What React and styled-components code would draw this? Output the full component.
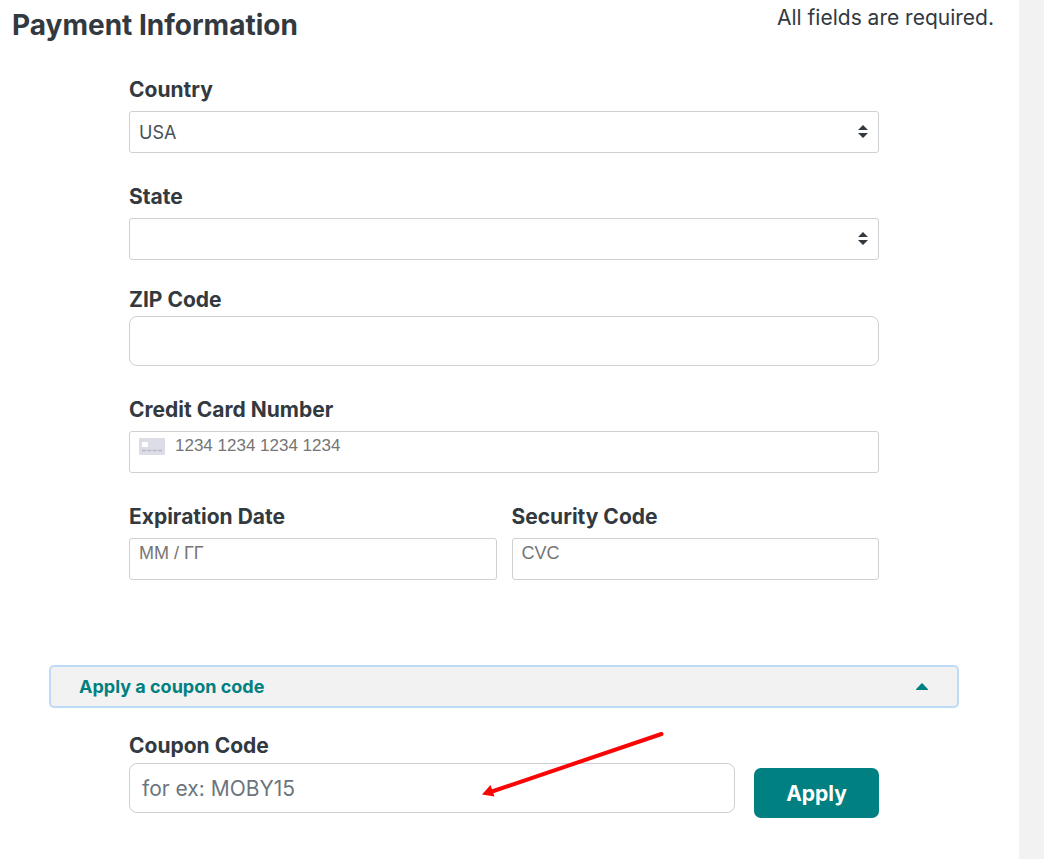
import React, { useState } from "react";
import styled, { createGlobalStyle } from "styled-components";

const App = () => {
  const [open, setOpen] = useState(true);

  return (
    <Page>
      <GlobalStyle />
      <Sheet>
        <Header>
          <Title>Payment Information</Title>
          <Note>All fields are required.</Note>
        </Header>
        <form onSubmit={(e) => e.preventDefault()}>
          <Fields>
            <Field>
              <Label htmlFor="country">Country</Label>
              <SelectWrapper>
                <Select id="country" defaultValue="USA">
                  <option>USA</option>
                </Select>
                <SortArrows />
              </SelectWrapper>
            </Field>
            <Field>
              <Label htmlFor="state">State</Label>
              <SelectWrapper>
                <Select id="state" defaultValue="">
                  <option value=""></option>
                </Select>
                <SortArrows />
              </SelectWrapper>
            </Field>
            <Field $tight>
              <Label htmlFor="zip">ZIP Code</Label>
              <TextInput id="zip" />
            </Field>
            <Field>
              <Label htmlFor="card">Credit Card Number</Label>
              <CardBox>
                <CardIcon />
                <CardInput id="card" $small placeholder="1234 1234 1234 1234" />
              </CardBox>
            </Field>
            <Row>
              <Field>
                <Label htmlFor="expiry">Expiration Date</Label>
                <CardBox>
                  <CardInput id="expiry" placeholder="MM / ГГ" />
                </CardBox>
              </Field>
              <Field>
                <Label htmlFor="cvc">Security Code</Label>
                <CardBox>
                  <CardInput id="cvc" placeholder="CVC" />
                </CardBox>
              </Field>
            </Row>
          </Fields>
          <CouponToggle
            type="button"
            aria-expanded={open}
            onClick={() => setOpen(!open)}
          >
            Apply a coupon code
            <Caret $open={open} viewBox="0 0 12 7">
              <path d="M0 6.2 5.4.5q.6-.6 1.2 0L12 6.2q.2.8-.6.8H.6Q-.2 7 0 6.2Z" />
            </Caret>
          </CouponToggle>
          {open && (
            <CouponRow>
              <CouponField>
                <Label htmlFor="coupon">Coupon Code</Label>
                <TextInput id="coupon" placeholder="for ex: MOBY15" />
                <Arrow viewBox="0 0 182 66">
                  <path d="M179.500 2 10 59.500" />
                  <polygon points="0,62.500 8.500,53 12.500,64.500" />
                </Arrow>
              </CouponField>
              <ApplyButton type="submit">Apply</ApplyButton>
            </CouponRow>
          )}
        </form>
      </Sheet>
      <Gutter />
    </Page>
  );
};

const SortArrows = () => (
  <ArrowsSvg viewBox="0 0 10 13">
    <path d="M5 0 10 5H0ZM5 13 0 8h10Z" />
  </ArrowsSvg>
);

const CardIcon = () => (
  <CardSvg viewBox="0 0 26 17">
    <rect width="26" height="17" rx="1" fill="#dcdde6" />
    <rect x="3" y="4" width="6" height="5" rx="1" fill="#fff" />
    <path
      d="M3 12.5h4M8.300 12.500h4M13.700 12.500h4M19 12.500h4"
      stroke="#b5b7c6"
      strokeWidth="1.500"
    />
  </CardSvg>
);

export default App;

const GlobalStyle = createGlobalStyle`
  * {
    box-sizing: border-box;
  }

  body {
    margin: 0;
    background: white;
    color: #32393f;
    font-family: Inter, "Open Sans", sans-serif;
  }

  input, select, button {
    font-family: inherit;
    color: inherit;
  }
`;

const Page = styled.div`
  display: flex;
  min-height: 100vh;
  padding-right: 4px;
`;

const Sheet = styled.main`
  flex: 1;
  min-width: 0;
`;

const Gutter = styled.div`
  width: 25px;
  background: #f2f2f2;
`;

const Header = styled.header`
  display: flex;
  justify-content: space-between;
  align-items: flex-start;
  padding: 2px 25px 0 12px;
  margin-bottom: 27px;
`;

const Title = styled.h1`
  margin: 0;
  padding-top: 2px;
  font-size: 28px;
  font-weight: 700;
  line-height: 42px;
`;

const Note = styled.span`
  font-size: 21px;
  line-height: 32px;
`;

const Fields = styled.div`
  display: flex;
  flex-direction: column;
  gap: 29px;
  padding: 2px 140px 0 129px;
`;

const Field = styled.div`
  display: flex;
  flex-direction: column;
  gap: ${(props) => (props.$tight ? "1px" : "6px")};
  margin-top: ${(props) => (props.$tight ? "-4px" : "0")};
`;

const Row = styled.div`
  display: grid;
  grid-template-columns: 1fr 1fr;
  gap: 15px;
`;

const Label = styled.label`
  font-size: 21px;
  font-weight: 700;
  line-height: 30px;
`;

const SelectWrapper = styled.div`
  position: relative;
`;

const Select = styled.select`
  display: block;
  width: 100%;
  height: 42px;
  padding: 0 32px 0 9px;
  appearance: none;
  background: white;
  border: 1px solid #ced0d4;
  border-radius: 3px;
  color: #495057;
  font-size: 18px;
`;

const ArrowsSvg = styled.svg`
  position: absolute;
  top: 14px;
  right: 11px;
  width: 10px;
  height: 13px;
  fill: #32393f;
  pointer-events: none;
`;

const TextInput = styled.input`
  width: 100%;
  height: 50px;
  padding: 0 12px;
  border: 1px solid #ced0d4;
  border-radius: 8px;
  font-size: 21px;

  &::placeholder {
    color: #6c757d;
    opacity: 1;
  }
`;

const CardBox = styled.div`
  display: flex;
  gap: 10px;
  height: 42px;
  padding: 4px 9px;
  border: 1px solid #ced0d4;
  border-radius: 3px;
`;

const CardSvg = styled.svg`
  flex: none;
  width: 26px;
  height: 17px;
  margin-top: 2px;
`;

const CardInput = styled.input`
  flex: 1;
  min-width: 0;
  height: 20px;
  padding: 0;
  border: 0;
  outline: none;
  font-family: "Liberation Sans", Arial, sans-serif;
  font-size: ${(props) => (props.$small ? "17px" : "18px")};

  &::placeholder {
    color: #757575;
  }
`;

const CouponToggle = styled.button`
  display: flex;
  justify-content: space-between;
  align-items: center;
  width: calc(100% - 109px);
  height: 43px;
  margin: 85px 60px 0 49px;
  padding: 0 29px 0 28px;
  background: #f2f2f2;
  border: 2px solid #bddaf9;
  border-radius: 5px;
  color: #008080;
  font-size: 18px;
  font-weight: 700;
`;

const Caret = styled.svg`
  width: 12px;
  height: 7px;
  fill: #008080;
  transform: ${(props) => (props.$open ? "none" : "rotate(180deg)")};
`;

const CouponRow = styled.div`
  display: flex;
  align-items: flex-end;
  gap: 19px;
  padding: 23px 140px 40px 129px;
`;

const CouponField = styled.div`
  position: relative;
  display: flex;
  flex: 1;
  flex-direction: column;
  gap: 2px;
  padding-bottom: 5px;
`;

const Arrow = styled.svg`
  position: absolute;
  top: 1px;
  right: 71px;
  width: 182px;
  height: 66px;
  pointer-events: none;

  path {
    stroke: #fa0505;
    stroke-width: 4;
    stroke-linecap: round;
  }

  polygon {
    fill: #fa0505;
  }
`;

const ApplyButton = styled.button`
  width: 125px;
  height: 50px;
  background: #008080;
  border: 0;
  border-radius: 7px;
  color: white;
  font-size: 21px;
  font-weight: 700;
`;
